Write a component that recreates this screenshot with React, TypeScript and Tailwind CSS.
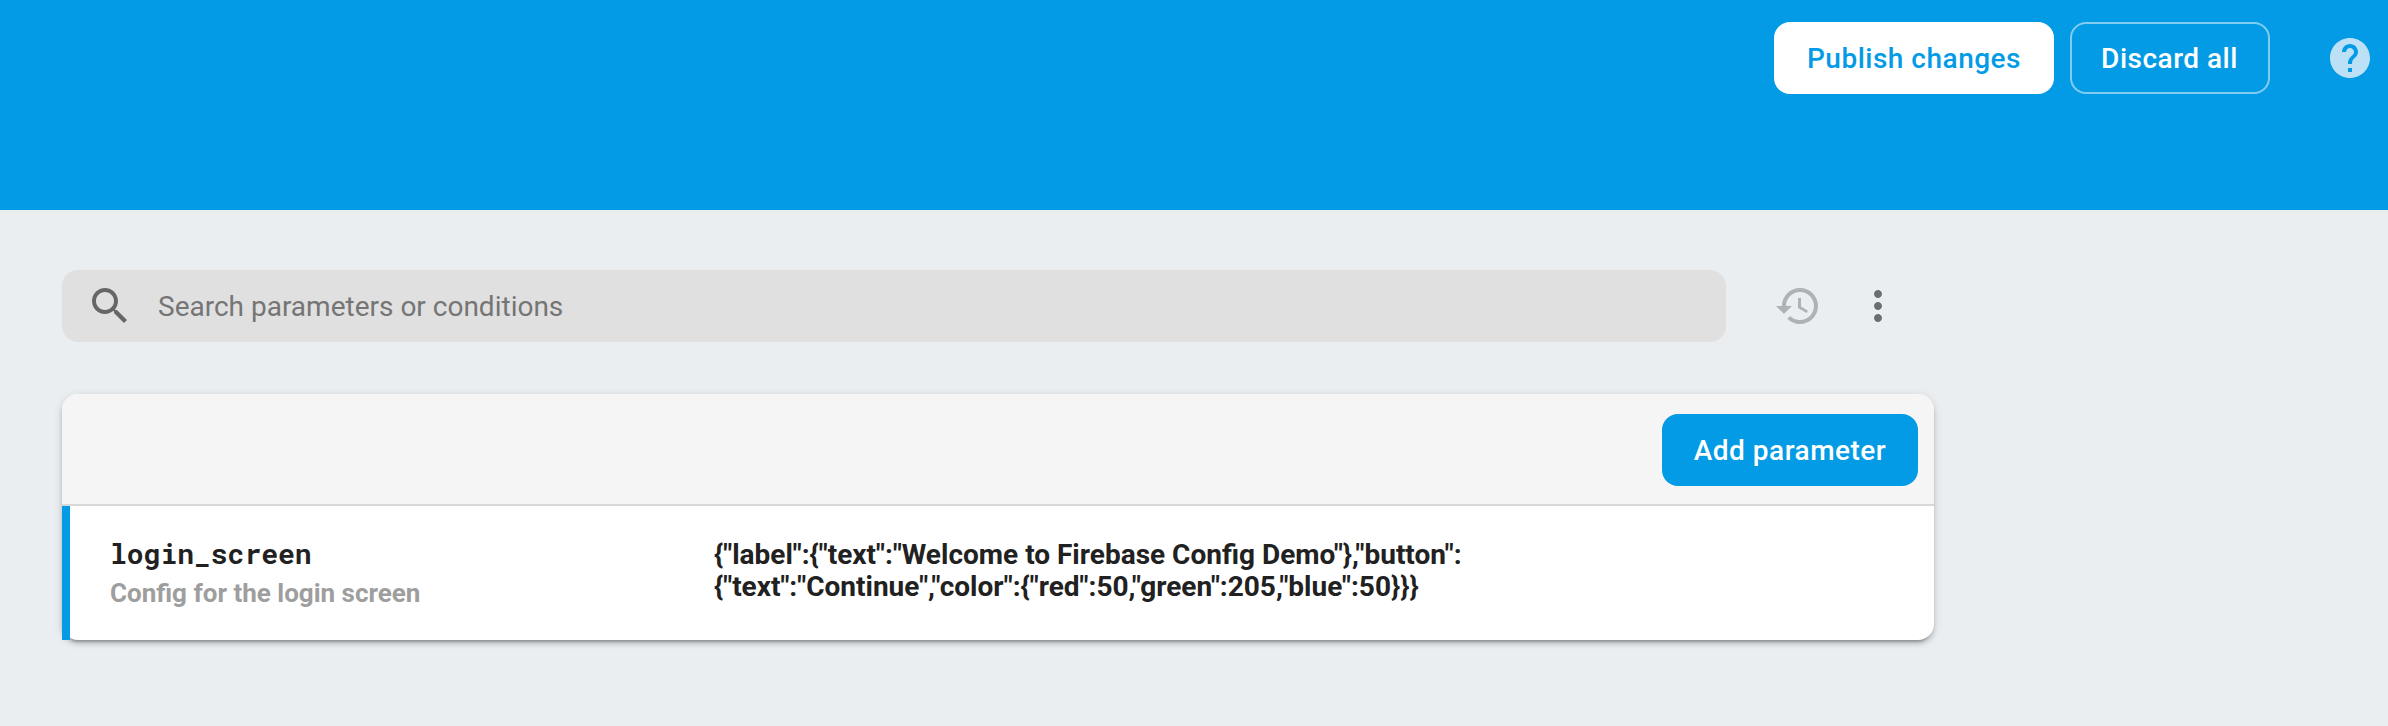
import type { ReactNode } from "react";

function Icon({ path, className }: { path: string; className?: string }) {
  return (
    <svg viewBox="0 0 24 24" className={`size-12 shrink-0 fill-current ${className ?? ""}`} aria-hidden="true">
      <path d={path} />
    </svg>
  );
}

const HELP =
  "M12 2C6.48 2 2 6.48 2 12s4.48 10 10 10 10-4.48 10-10S17.52 2 12 2zm1 17h-2v-2h2v2zm2.07-7.75l-.9.92C13.45 12.9 13 13.5 13 15h-2v-.5c0-1.1.45-2.1 1.17-2.83l1.24-1.26c.37-.36.59-.86.59-1.41 0-1.1-.9-2-2-2s-2 .9-2 2H8c0-2.21 1.79-4 4-4s4 1.79 4 4c0 .88-.36 1.68-.93 2.25z";
const SEARCH =
  "M15.5 14h-.79l-.28-.27C15.41 12.59 16 11.11 16 9.5 16 5.91 13.09 3 9.5 3S3 5.91 3 9.5 5.91 16 9.5 16c1.61 0 3.09-.59 4.23-1.57l.27.28v.79l5 4.99L20.49 19l-4.99-5zm-6 0C7.01 14 5 11.99 5 9.5S7.01 5 9.5 5 14 7.01 14 9.5 11.99 14 9.5 14z";
const HISTORY =
  "M13 3c-4.97 0-9 4.03-9 9H1l3.89 3.89.07.14L9 12H6c0-3.87 3.13-7 7-7s7 3.13 7 7-3.13 7-7 7c-1.93 0-3.68-.79-4.94-2.06l-1.42 1.42C8.27 19.99 10.51 21 13 21c4.97 0 9-4.03 9-9s-4.03-9-9-9zm-1 5v5l4.28 2.54.72-1.21-3.5-2.08V8H12z";
const MORE =
  "M12 8c1.1 0 2-.9 2-2s-.9-2-2-2-2 .9-2 2 .9 2 2 2zm0 2c-1.1 0-2 .9-2 2s.9 2 2 2 2-.9 2-2-.9-2-2-2zm0 6c-1.1 0-2 .9-2 2s.9 2 2 2 2-.9 2-2-.9-2-2-2z";

function Button({ className, children }: { className: string; children: ReactNode }) {
  return (
    <button
      type="button"
      className={`flex h-18 shrink-0 items-center justify-center rounded-2xl pt-0.5 text-[28px] font-medium tracking-[0.5px] whitespace-nowrap ${className}`}
    >
      {children}
    </button>
  );
}

export default function App() {
  return (
    <div className="h-[726px] w-[2388px] overflow-hidden bg-[#eaeef1] font-[Roboto,sans-serif]">
      <header className="flex h-[210px] items-start justify-end bg-[#039be5] pt-[22px] pr-[14px]">
        <Button className="w-[280px] bg-white text-[#039be5]">Publish changes</Button>
        <Button className="ml-4 w-[200px] border-2 border-white/50 pr-px text-white">Discard all</Button>
        <button type="button" aria-label="Help" className="mt-3 ml-14 text-[#bce1f7]">
          <Icon path={HELP} />
        </button>
      </header>

      <main className="w-[1934px] pt-[60px] pl-[62px]">
        <div className="flex items-center">
          <label className="flex h-18 w-[1664px] items-center rounded-2xl bg-[#e0e0e0] pl-6">
            <Icon path={SEARCH} className="text-[#666666]" />
            <input
              type="text"
              placeholder="Search parameters or conditions"
              className="ml-6 min-w-0 flex-1 bg-transparent pt-0.5 text-[28px] outline-none placeholder:text-[#757575]"
            />
          </label>
          <button type="button" aria-label="History" className="ml-12 text-[#afb2b4]">
            <Icon path={HISTORY} />
          </button>
          <button type="button" aria-label="More" className="ml-8 text-[#6b6d6e]">
            <Icon path={MORE} />
          </button>
        </div>

        <section className="mt-[52px] h-[246px] rounded-2xl bg-white shadow-[0_6px_2px_-4px_rgba(0,0,0,0.2),0_4px_4px_0_rgba(0,0,0,0.14),0_2px_10px_0_rgba(0,0,0,0.12)]">
          <div className="flex h-28 items-start justify-end rounded-t-2xl border-b-2 border-[#d8d8d8] bg-[#f5f5f5] pt-5 pr-4">
            <Button className="w-[256px] bg-[#039be5] text-white">Add parameter</Button>
          </div>
          <div className="flex h-[134px] border-l-8 border-[#039be5] pt-8 pl-10 text-[#212121]">
            <div className="w-[604px]">
              <div className="font-['Roboto_Mono','Liberation_Mono',monospace] text-[28px] leading-8 font-bold">
                login_screen
              </div>
              <div className="mt-[7px] text-[26px] leading-8 font-bold text-[#9e9e9e]">Config for the login screen</div>
            </div>
            <div className="pt-px text-[28px] leading-8 font-bold">
              {'{"label":{"text":"Welcome to Firebase Config Demo"},"button":'}
              <br />
              {'{"text":"Continue","color":{"red":50,"green":205,"blue":50}}}'}
            </div>
          </div>
        </section>
      </main>
    </div>
  );
}
